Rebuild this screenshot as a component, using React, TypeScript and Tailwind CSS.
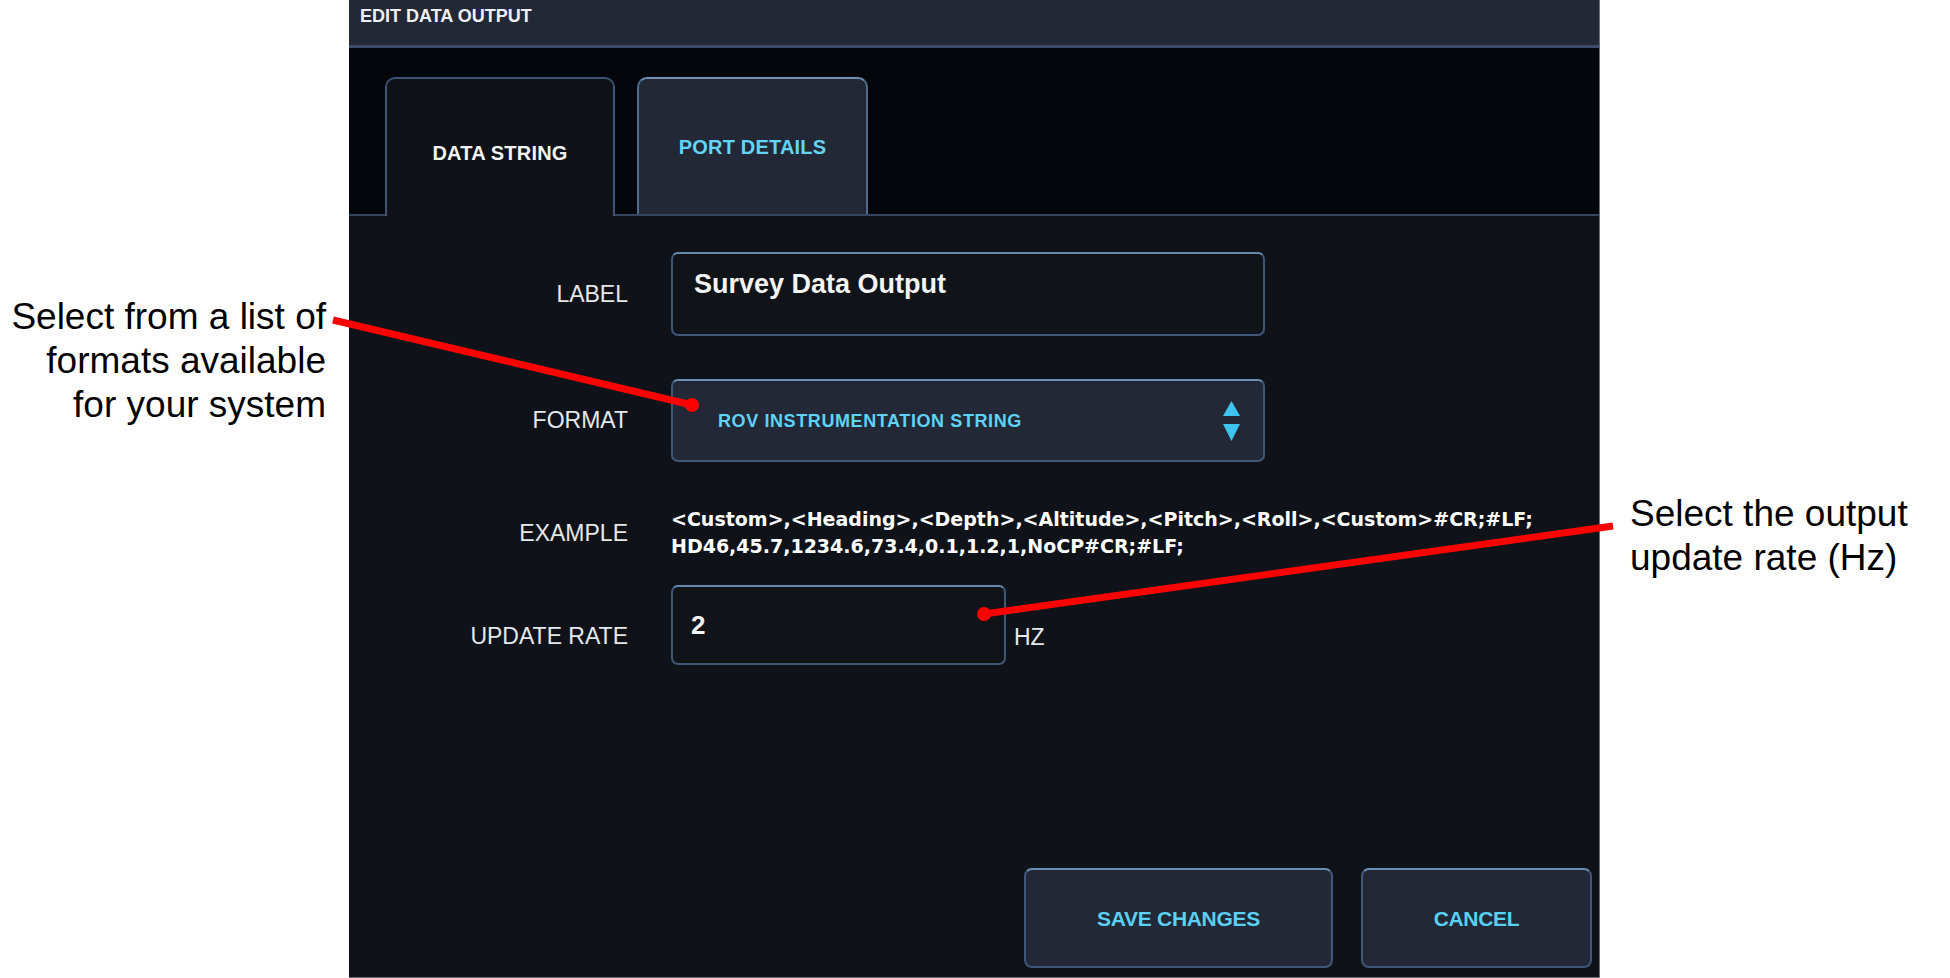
import React from "react";

const arial = "font-['Liberation_Sans',Arial,sans-serif]";

const FieldLabel = ({ children, className = "" }: { children: React.ReactNode; className?: string }) => (
  <div className={`flex w-[279px] shrink-0 justify-end text-[23px] leading-none text-[#e6e8ea] ${className}`}>
    {children}
  </div>
);

const SelectArrows = () => (
  <svg width="17" height="40" viewBox="0 0 17 40">
    <polygon points="8.5,0 17,15 0,15" fill="#3ec5ef" />
    <polygon points="0,23 17,23 8.5,40" fill="#3ec5ef" />
  </svg>
);

export default function App() {
  return (
    <div className={`relative flex h-[978px] w-[1950px] overflow-hidden bg-white ${arial}`}>
      {/* Left callout */}
      <div className="w-[349px] shrink-0 pr-[23px] pt-[295px] text-right text-[37px] leading-[44px] text-black">
        <div>Select from a list of</div>
        <div>formats available</div>
        <div>for your system</div>
      </div>

      {/* Dialog */}
      <div className="flex h-[978px] w-[1251px] shrink-0 flex-col border-b border-r border-[#6b6e73]">
        {/* Title bar */}
        <div className="h-[48px] border-b-[3px] border-[#3a4c6c] bg-[#222836] pl-[11px] pt-[7px] text-[18px] font-bold leading-none text-[#eef0f4]">
          EDIT DATA OUTPUT
        </div>

        {/* Tabs */}
        <div className="flex h-[168px] items-end gap-[22px] border-b-2 border-[#34465f] bg-[#03060b] pl-[36px] pt-[29px]">
          <div className="relative z-10 -mb-[2px] flex h-[139px] w-[230px] justify-center rounded-t-[10px] border-2 border-b-0 border-[#3c5373] bg-[#0f1319] pt-[64px] text-[20px] font-bold leading-none tracking-[0.2px] text-[#f4f4f4]">
            DATA STRING
          </div>
          <div className="flex h-[137px] w-[231px] justify-center rounded-t-[10px] border-2 border-b-0 border-[#4b6b90] border-t-[#6e90b5] bg-[#222836] pt-[58px] text-[20px] font-bold leading-none tracking-[0.2px] text-[#62d4f6]">
            PORT DETAILS
          </div>
        </div>

        {/* Body */}
        <div className="flex flex-1 flex-col bg-[#0f1319] pt-[36px]">
          <div className="flex">
            <FieldLabel className="items-center">LABEL</FieldLabel>
            <div className="ml-[43px] h-[84px] w-[594px] rounded-[7px] border-2 border-[#3f5778] border-t-[#6488ae] bg-[#101317] pl-[21px] pt-[17px] text-[27px] font-bold leading-none text-[#f4f4f4]">
              Survey Data Output
            </div>
          </div>

          <div className="mt-[43px] flex">
            <FieldLabel className="items-center">FORMAT</FieldLabel>
            <div className="ml-[43px] flex h-[83px] w-[594px] items-center justify-between rounded-[7px] border-2 border-[#3f5778] border-t-[#6a8fb6] bg-[#222836] pl-[45px] pr-[23px]">
              <span className="text-[18px] font-bold leading-none tracking-[0.6px] text-[#5fd2f5]">
                ROV INSTRUMENTATION STRING
              </span>
              <SelectArrows />
            </div>
          </div>

          <div className="mt-[44px] flex">
            <FieldLabel className="items-center">EXAMPLE</FieldLabel>
            <div className="ml-[43px] whitespace-nowrap font-['DejaVu_Sans',sans-serif] text-[19px] font-bold leading-[27px] text-white">
              <div>{"<Custom>,<Heading>,<Depth>,<Altitude>,<Pitch>,<Roll>,<Custom>#CR;#LF;"}</div>
              <div>HD46,45.7,1234.6,73.4,0.1,1.2,1,NoCP#CR;#LF;</div>
            </div>
          </div>

          <div className="mt-[25px] flex items-end">
            <FieldLabel className="mb-[17px]">UPDATE RATE</FieldLabel>
            <div className="ml-[43px] flex h-[80px] w-[335px] items-center rounded-[7px] border-2 border-[#3f5778] border-t-[#6488ae] bg-[#101317] pl-[18px] text-[26px] font-bold leading-none text-[#f4f4f4]">
              2
            </div>
            <span className="mb-[16px] ml-[8px] text-[23px] leading-none text-[#e6e8ea]">HZ</span>
          </div>

          {/* Actions */}
          <div className="mt-auto flex justify-end gap-[28px] pb-[9px] pr-[7px]">
            <button className="flex h-[100px] w-[309px] items-center justify-center rounded-[8px] border-2 border-[#3f5778] border-t-[#6a8fb6] bg-[#222836] text-[21px] font-bold leading-none tracking-[-0.3px] text-[#5ad0f3]">
              SAVE CHANGES
            </button>
            <button className="flex h-[100px] w-[231px] items-center justify-center rounded-[8px] border-2 border-[#3f5778] border-t-[#6a8fb6] bg-[#222836] text-[21px] font-bold leading-none tracking-[-0.3px] text-[#5ad0f3]">
              CANCEL
            </button>
          </div>
        </div>
      </div>

      {/* Right callout */}
      <div className="flex-1 pl-[30px] pt-[492px] text-[37px] leading-[44px] text-black">
        <div className="whitespace-nowrap">Select the output</div>
        <div className="whitespace-nowrap">update rate (Hz)</div>
      </div>

      {/* Callout pointers */}
      <svg
        className="pointer-events-none absolute left-0 top-0"
        width="1950"
        height="978"
        viewBox="0 0 1950 978"
      >
        <line x1="333" y1="320" x2="692" y2="405" stroke="#ff0000" strokeWidth="7" />
        <circle cx="692" cy="405" r="7" fill="#ff0000" />
        <line x1="984" y1="614" x2="1613" y2="526" stroke="#ff0000" strokeWidth="7" />
        <circle cx="984" cy="614" r="7" fill="#ff0000" />
      </svg>
    </div>
  );
}
